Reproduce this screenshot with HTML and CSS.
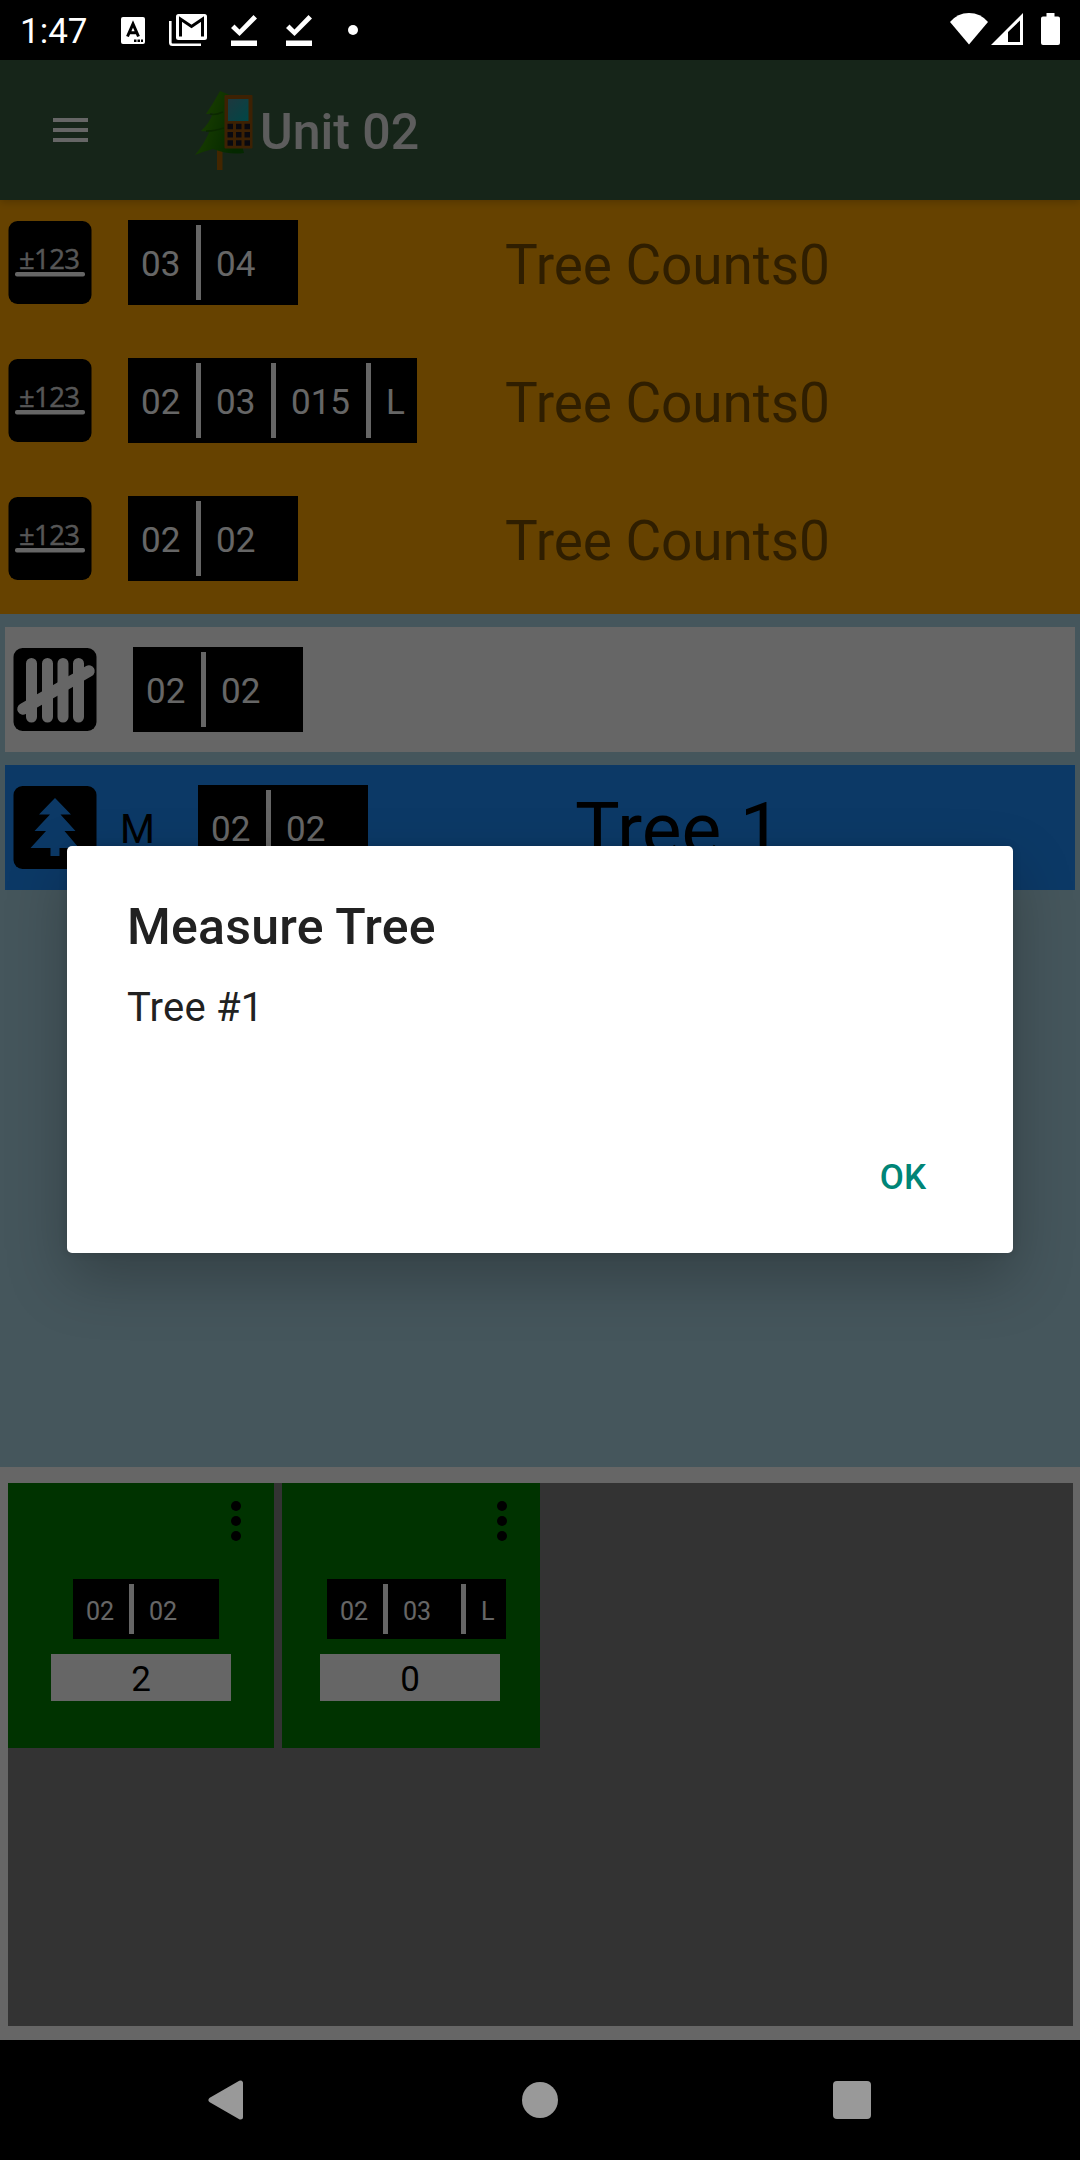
FILE: index.html
```html
<!DOCTYPE html>
<html lang="en">
<head>
<meta charset="utf-8">
<title>Unit 02</title>
<link rel="stylesheet" href="styles.css">
</head>
<body>
<svg class="defs" aria-hidden="true">
  <defs>
    <linearGradient id="leaf" x1="0" y1="0" x2="1" y2="0.4"><stop offset="0.2" stop-color="#409c00"/><stop offset="1" stop-color="#0b6400"/></linearGradient>
    <linearGradient id="lcd" x1="0" y1="0" x2="1" y2="1"><stop offset="0" stop-color="#4a8c9c"/><stop offset="1" stop-color="#00b0b0"/></linearGradient>
    <symbol id="plot" viewBox="0 0 84 84">
      <rect x="0.5" y="1" width="83" height="83" rx="9"/>
      <text class="plot-text" x="11" y="49" textLength="61">±123</text>
      <rect x="7" y="52" width="70" height="4.600" rx="2" fill="#fff"/>
    </symbol>
    <symbol id="tally" viewBox="0 0 84 84">
      <rect x="0.5" y="1" width="83" height="83" rx="9"/>
      <path d="M18.500 16.500V70M34.500 16.500V70M50 16.500V70M65.500 16.500V70" fill="none" stroke="#fff" stroke-width="11" stroke-linecap="round"/>
      <path d="M10 62L76 24" fill="none" stroke="#fff" stroke-width="11.500" stroke-linecap="round"/>
    </symbol>
    <symbol id="tree" viewBox="0 0 84 84">
      <rect x="0.5" y="1" width="83" height="83" rx="9"/>
      <path d="M42 13L58 29.500H47.500L62.500 46H51.500L66 63H46.500V71H37.500V63H17.500L33 46H21.500L37 29.500H26Z" fill="#1e90ff"/>
    </symbol>
    <symbol id="done" viewBox="0 0 26 32">
      <path d="M0 13L3.500 9.500L8.500 14.500L22.500 0L26 3.500L8.500 21ZM0 25.500H26V31H0Z" fill="#fff"/>
    </symbol>
    <symbol id="dots" viewBox="0 0 10 40">
      <circle cx="5" cy="5" r="5"/><circle cx="5" cy="20" r="5"/><circle cx="5" cy="35" r="5"/>
    </symbol>
  </defs>
</svg>

<div class="screen">
  <header class="status">
    <span class="clock">1:47</span>
    <svg class="s-a" viewBox="0 0 24 27" width="24" height="27"><rect width="24" height="27" rx="2" fill="#fff"/><path d="M6.500 19.500L12 7L17.500 19.500M8.500 15.800H15.500" fill="none" stroke="#000" stroke-width="3"/><path d="M13 22.500h2.500v2.500H13zM16.500 22.500H19v2.500h-2.500zM20 22.500h2v2.500h-2z"/></svg>
    <svg class="s-mail" viewBox="0 0 38 32" width="38" height="32"><path d="M1.300 7V28.500Q1.300 30.700 3.500 30.700H32" fill="none" stroke="#fff" stroke-width="2.600"/><rect x="7" y="0" width="31" height="26" rx="2.500" fill="#fff"/><path d="M11.500 22.500V5L22.500 12.500L33.500 5V22.500" fill="none" stroke="#000" stroke-width="3"/></svg>
    <svg class="s-done" width="26" height="32"><use href="#done"/></svg>
    <svg class="s-done" width="26" height="32"><use href="#done"/></svg>
    <span class="s-dot"></span>
    <svg class="s-right" viewBox="0 0 110 32" width="110" height="32">
      <path d="M0 9Q7.500 0 19 0T38 9L19 31.500Z" fill="#fff"/>
      <path d="M41 32L73 0V32ZM58 19V29H70V7.500Z" fill="#fff" fill-rule="evenodd"/>
      <path d="M96.500 0h8v3.500h3.500q2 0 2 2V30q0 2-2 2H93q-2 0-2-2V5.500q0-2 2-2h3.500Z" fill="#fff"/>
    </svg>
  </header>

  <div class="app">
    <div class="toolbar">
      <svg class="menu" viewBox="0 0 35 24" width="35" height="24"><path d="M0 0H35V4H0ZM0 10H35V14H0ZM0 20H35V24H0Z" fill="#fff"/></svg>
      <svg class="logo" viewBox="0 0 58 80" width="58" height="80">
        <rect x="22" y="55" width="5.500" height="24" fill="#a86000"/>
        <path d="M25 0Q18 13 11 23Q16 23 18 22Q14 33 6 40Q12 41 15 39Q10 52 0 64Q10 60 18 58Q34 64 49 62L46 50L35 4Z" fill="url(#leaf)"/>
        <path d="M15 23Q20 24.500 28 21M11 40Q18 40.500 29 37" stroke="#1c6400" stroke-width="1.500" fill="none"/>
        <rect x="29.500" y="4" width="28" height="53.500" rx="1" fill="#9a5408"/>
        <rect x="33" y="8" width="20.500" height="22" fill="url(#lcd)"/>
        <path d="M32.500 35.500h5.500M41 35.500h5.500M49.500 35.500h5.500M32.500 43.800h5.500M41 43.800h5.500M49.500 43.800h5.500M32.500 52h5.500M41 52h5.500M49.500 52h5.500" stroke="#181828" stroke-width="5.500"/>
      </svg>
      <h1 class="title">Unit 02</h1>
    </div>

    <main class="list">
      <div class="plots">
        <div class="row">
          <svg class="icon"><use href="#plot"/></svg>
          <div class="chip"><span>03</span><i></i><span class="wide">04</span></div>
          <span class="counts">Tree Counts0</span>
        </div>
        <div class="row">
          <svg class="icon"><use href="#plot"/></svg>
          <div class="chip"><span>02</span><i></i><span>03</span><i></i><span class="live">015</span><i></i><span class="end">L</span></div>
          <span class="counts">Tree Counts0</span>
        </div>
        <div class="row">
          <svg class="icon"><use href="#plot"/></svg>
          <div class="chip"><span>02</span><i></i><span class="wide">02</span></div>
          <span class="counts">Tree Counts0</span>
        </div>
      </div>
      <div class="card">
        <svg class="icon"><use href="#tally"/></svg>
        <div class="chip"><span>02</span><i></i><span class="wide">02</span></div>
      </div>
      <div class="card measured">
        <svg class="icon"><use href="#tree"/></svg>
        <span class="kind">M</span>
        <div class="chip"><span>02</span><i></i><span class="wide">02</span></div>
        <span class="tree-name">Tree 1</span>
      </div>
    </main>

    <section class="tray">
      <div class="tiles">
        <div class="tile">
          <svg class="more"><use href="#dots"/></svg>
          <div class="chip small"><span>02</span><i></i><span class="wide">02</span></div>
          <div class="tally-count">2</div>
        </div>
        <div class="tile second">
          <svg class="more"><use href="#dots"/></svg>
          <div class="chip small"><span>02</span><i></i><span class="mid">03</span><i></i><span class="end">L</span></div>
          <div class="tally-count">0</div>
        </div>
      </div>
    </section>

    <div class="scrim"></div>
    <div class="dialog" role="dialog">
      <h2>Measure Tree</h2>
      <p>Tree #1</p>
      <button class="ok">OK</button>
    </div>
  </div>

  <nav class="nav">
    <svg viewBox="0 0 36 42" width="36" height="42"><path d="M3 21L32.500 4V38Z" fill="#999" stroke="#999" stroke-width="5" stroke-linejoin="round"/></svg>
    <span class="home"></span>
    <span class="recent"></span>
  </nav>
</div>
</body>
</html>
```
FILE: styles.css
```css
* { box-sizing: border-box; }
body { margin: 0; background: #000; font-family: Roboto, sans-serif; }
h1, h2, p { margin: 0; }
svg { display: block; flex: none; }
.defs { position: absolute; width: 0; height: 0; }

.screen { width: 1080px; height: 2160px; display: flex; flex-direction: column; overflow: hidden; }

/* status bar */
.status { height: 60px; display: flex; align-items: flex-start; color: #fff; }
.clock { width: 101px; padding-left: 20px; margin-right: 20px; font-size: 35px; line-height: 41px; margin-top: 11px; }
.s-a { margin-top: 17px; }
.s-mail { margin: 14px 0 0 24px; }
.s-done { margin: 15px 0 0 24px; }
.s-done + .s-done { margin-left: 29px; }
.s-dot { width: 10px; height: 10px; border-radius: 50%; background: #fff; margin: 25px 0 0 36px; }
.s-right { margin: 13px 20px 0 auto; }

/* app */
.app { position: relative; height: 1980px; display: flex; flex-direction: column; }
.toolbar { position: relative; z-index: 1; height: 140px; flex: none; display: flex; align-items: center; padding-left: 53px; background: #375d3f; box-shadow: 0 2px 8px rgba(0,0,0,.2); }
.logo { margin: 1px 0 0 107px; }
.title { margin: 3px 0 0 7px; font-size: 50px; font-weight: 500; line-height: 60px; color: #e8e8e8; }

.list { height: 1267px; flex: none; background: #add8e6; }
.plots { background: #ffa500; margin-bottom: 13px; }
.row, .card { display: flex; align-items: flex-start; padding-left: 8px; }
.row { height: 138px; padding-top: 20px; }
.card { height: 125px; margin: 0 5px 13px; padding-top: 20px; background: #fff; overflow: hidden; }
.measured { background: #1e90ff; }
.icon { width: 84px; height: 84px; margin-right: 36px; }
.plot-text { font-family: "Open Sans", sans-serif; font-size: 27.500px; fill: #d8d8d8; stroke: #d8d8d8; stroke-width: .4px; }

.chip { display: flex; align-items: center; height: 85px; background: #000; color: #fff; font-size: 35px; line-height: 41px; flex: none; }
.chip span { width: 70px; padding: 4px 0 0 15px; }
.chip span:first-child { width: 68px; padding-left: 13px; }
.chip i { width: 5px; height: 75px; background: #fff; }
.chip .wide { width: 97px; }
.chip .live { width: 90px; }
.chip .end { width: 46px; }
.row .chip { margin-right: auto; }
.counts { width: 575px; font-size: 55px; line-height: 65px; letter-spacing: -.1px; margin-top: 13px; color: rgba(0,0,0,.54); }
.kind { width: 65px; margin: 21px 14px 0 -14px; padding-left: 1px; font-size: 40px; line-height: 47px; }
.tree-name { margin-left: 207px; font-size: 75px; line-height: 88px; }

/* tally tray */
.tray { flex: 1; background: #fff; padding: 16px 7px 14px 8px; }
.tiles { height: 100%; background: #808080; display: flex; align-items: flex-start; gap: 8px; }
.tile { width: 266px; height: 265px; background: #008000; display: flex; flex-direction: column; align-items: center; padding-top: 18px; }
.second { width: 258px; }
.more { width: 10px; height: 40px; align-self: flex-end; margin-right: 33px; }
.chip.small { height: 60px; margin: 38px 0 15px 10px; font-size: 25px; line-height: 30px; }
.small i { height: 50px; }
.chip.small span { padding-top: 5px; }
.chip.small span:first-child { width: 56px; }
.chip.small .wide { width: 85px; }
.chip.small .mid { width: 73px; }
.chip.small .end { width: 40px; }
.second .chip.small { margin-left: 11px; }
.tally-count { width: 180px; height: 47px; background: #fff; text-align: center; font-size: 35px; line-height: 51px; }
.second .tally-count { margin-right: 2px; }

/* dialog */
.scrim { position: absolute; inset: 0; z-index: 2; background: rgba(0,0,0,.6); }
.dialog { position: absolute; z-index: 3; left: 67px; top: 786px; width: 946px; height: 407px; padding: 51px 60px 0; display: flex; flex-direction: column; background: #fff; border-radius: 5px; color: #212121; box-shadow: 0 25px 60px rgba(0,0,0,.25), 0 0 8px rgba(0,0,0,.12); }
.dialog h2 { font-size: 50px; font-weight: 500; line-height: 60px; letter-spacing: .25px; }
.dialog p { font-size: 40px; line-height: 48px; margin-top: 27px; letter-spacing: .2px; }
.ok { align-self: flex-end; margin: 125px 27px 0 0; padding: 0; border: 0; background: none; font: 500 35px/42px Roboto, sans-serif; color: #008577; }

/* navigation bar */
.nav { height: 120px; display: flex; justify-content: space-between; align-items: center; padding: 0 209px 0 208px; }
.home { width: 36px; height: 36px; border-radius: 50%; background: #999; margin-left: 2px; }
.recent { width: 38px; height: 38px; border-radius: 4px; background: #999; }
```
